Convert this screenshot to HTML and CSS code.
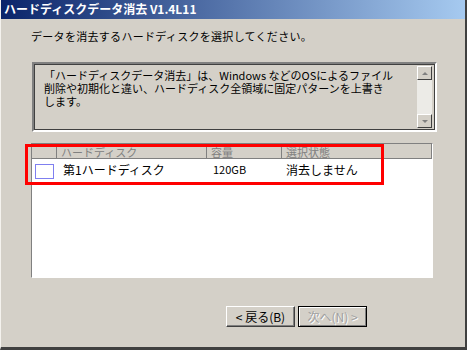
FILE: index.html
```html
<!DOCTYPE html>
<html lang="ja">
<head>
  <meta charset="UTF-8">
  <title>ハードディスクデータ消去</title>
  <link rel="stylesheet" href="styles.css">
</head>
<body>
  <div class="window">
    <div class="titlebar">ハードディスクデータ消去 V1.4L11</div>
    <div class="content">
      <p class="prompt">データを消去するハードディスクを選択してください。</p>

      <div class="info-panel">
        <div class="info-text">
          「ハードディスクデータ消去」は、Windows などのOSによるファイル<br>
          削除や初期化と違い、ハードディスク全領域に固定パターンを上書き<br>
          します。
        </div>
        <div class="scrollbar">
          <div class="scroll-btn"><span class="arrow-up"></span></div>
          <div class="scroll-track"></div>
          <div class="scroll-btn"><span class="arrow-down"></span></div>
        </div>
      </div>

      <div class="listview">
        <div class="list-header">
          <div class="col col-check"></div>
          <div class="col col-name">ハードディスク</div>
          <div class="col col-size">容量</div>
          <div class="col col-state">選択状態</div>
        </div>
        <div class="list-row">
          <div class="cell col-check"><span class="checkbox"></span></div>
          <div class="cell col-name">第1ハードディスク</div>
          <div class="cell col-size">120GB</div>
          <div class="cell col-state">消去しません</div>
        </div>
      </div>

      <div class="buttons">
        <button class="btn">&lt; 戻る(B)</button>
        <button class="btn btn-default" disabled>次へ(N) &gt;</button>
      </div>
    </div>
    <div class="highlight"></div>
  </div>
</body>
</html>
```

FILE: styles.css
```css
body {
  margin: 0;
  background: #d4d0c8;
  font-family: "Noto Sans CJK JP", "DejaVu Sans", sans-serif;
  font-size: 12px;
  color: #000;
}

.window {
  position: relative;
  width: 467px;
  height: 350px;
  box-sizing: border-box;
  background: #d4d0c8;
  border-left: 1px solid #f4f2ee;
  border-right: 2px solid #404040;
  border-bottom: 3px solid #404040;
  overflow: hidden;
}

.titlebar {
  height: 19px;
  line-height: 18px;
  padding-left: 3px;
  background: linear-gradient(to right, #0a246a, #a6caf0);
  color: #fff;
  font-weight: bold;
  font-size: 12px;
}

.content {
  display: flex;
  flex-direction: column;
  padding: 0 0 0 30px;
}

.prompt {
  margin: 9px 0 0 0;
  line-height: 16px;
  font-size: 11px;
  letter-spacing: 0.3px;
}

.info-panel {
  display: flex;
  margin-top: 18px;
  margin-left: 1px;
  width: 405px;
  height: 70px;
  box-sizing: border-box;
  border: 2px solid;
  border-color: #808080 #ffffff #ffffff #808080;
  outline: 1px solid #404040;
  outline-offset: -3px;
}

.info-text {
  flex: 1;
  padding: 5px 0 0 10px;
  font-size: 11px;
  line-height: 13px;
}

.scrollbar {
  width: 15px;
  display: flex;
  flex-direction: column;
  margin: 2px 3px 2px 0;
  background: #ecebe7;
}

.scroll-track {
  flex: 1;
}

.scroll-btn {
  height: 14px;
  box-sizing: border-box;
  background: #d4d0c8;
  border: 1px solid;
  border-color: #ffffff #404040 #404040 #ffffff;
  display: flex;
  align-items: center;
  justify-content: center;
}

.arrow-up {
  width: 0;
  height: 0;
  border-left: 3px solid transparent;
  border-right: 3px solid transparent;
  border-bottom: 3px solid #808080;
}

.arrow-down {
  width: 0;
  height: 0;
  border-left: 3px solid transparent;
  border-right: 3px solid transparent;
  border-top: 3px solid #808080;
}

.listview {
  margin-top: 11px;
  width: 402px;
  height: 135px;
  box-sizing: border-box;
  background: #fff;
  border: 1px solid;
  border-color: #808080 #ffffff #ffffff #808080;
}

.list-header {
  display: flex;
  height: 15px;
  background: #d4d0c8;
  color: #808080;
  font-size: 11px;
  line-height: 14px;
}

.list-header .col {
  box-sizing: border-box;
  border-right: 1px solid #808080;
  border-bottom: 1px solid #808080;
  padding: 1px 0 0 4px;
}

.list-header .col-state {
  flex: 1;
}

.col-check {
  width: 25px;
  flex: none;
}

.col-name {
  width: 150px;
  flex: none;
}

.col-size {
  width: 75px;
  flex: none;
}

.list-row {
  display: flex;
  align-items: center;
  height: 21px;
  line-height: 21px;
}

.list-row .cell {
  box-sizing: border-box;
  padding-left: 4px;
}

.list-row .col-name {
  padding-left: 6px;
}

.list-row .col-size {
  padding-left: 6px;
  font-size: 11px;
}

.checkbox {
  display: block;
  width: 19px;
  height: 15px;
  margin-left: -1px;
  margin-top: 3px;
  box-sizing: border-box;
  border: 1px solid #7f7ff0;
  background: #fff;
}

.buttons {
  display: flex;
  gap: 3px;
  margin-top: 28px;
  margin-left: 195px;
}

.btn {
  width: 69px;
  height: 21px;
  padding: 0;
  font-family: inherit;
  font-size: 12px;
  color: #000;
  background: #d4d0c8;
  border: 1px solid;
  border-color: #ffffff #404040 #404040 #ffffff;
  box-shadow: inset -1px -1px 0 #808080;
}

.btn-default {
  border: 1px solid #000;
  box-shadow: inset 1px 1px 0 #fff, inset -1px -1px 0 #808080;
}

.btn:disabled {
  color: #a0a0a0;
  text-shadow: 1px 1px 0 #fff;
}

.highlight {
  position: absolute;
  left: 24px;
  top: 144px;
  width: 359px;
  height: 41px;
  box-sizing: border-box;
  border: 3px solid #ff0000;
}
```
